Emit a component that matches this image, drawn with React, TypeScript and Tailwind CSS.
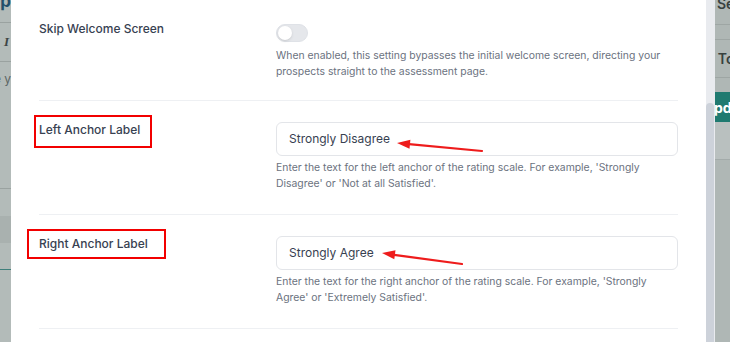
import type React from "react"

const rows = [
    {
        label: "Left Anchor Label",
        value: "Strongly Disagree",
        help: "Enter the text for the left anchor of the rating scale. For example, 'Strongly Disagree' or 'Not at all Satisfied'.",
    },
    {
        label: "Right Anchor Label",
        value: "Strongly Agree",
        help: "Enter the text for the right anchor of the rating scale. For example, 'Strongly Agree' or 'Extremely Satisfied'.",
    },
]

const LeftBackdrop: React.FC = () => (
    <div className="w-[11px] h-full bg-[#b3bbb9] flex flex-col overflow-hidden shrink-0">
        <div className="h-[23px] border-b border-[#9aa2a0] flex justify-end overflow-hidden">
            <span className="text-[17px] font-bold text-[#24506b] leading-none -mt-[7px] whitespace-nowrap">Up</span>
        </div>
        <div className="h-[39px] border-b border-[#9aa2a0] flex items-center justify-end overflow-hidden">
            <span className="text-[13px] italic font-bold text-[#3d4645] pr-[2px] font-['Liberation_Serif',serif]">I</span>
        </div>
        <div className="h-[127px] border-b border-[#9aa2a0] flex justify-end pt-[9px] overflow-hidden">
            <span className="text-[12px] text-[#5d6665] whitespace-nowrap leading-4">ue y</span>
        </div>
        <div className="h-[27px]" />
        <div className="h-[27px] bg-[#a9b1af]" />
        <div className="h-[27px] border-b border-[#3f7f7b]" />
        <div className="flex-1" />
    </div>
)

const RightBackdrop: React.FC = () => (
    <div className="w-[15px] h-full bg-[#afb7b5] flex flex-col overflow-hidden shrink-0">
        <div className="h-[25px] border-b border-[#9ea6a4] overflow-hidden pl-[2px]">
            <span className="block text-[14px] font-semibold text-[#38413f] leading-none -mt-[3px] whitespace-nowrap">Se</span>
        </div>
        <div className="h-[15px] border-b border-[#9ea6a4]" />
        <div className="h-[38px] border-b border-[#9ea6a4] flex items-center overflow-hidden">
            <span className="text-[14px] font-semibold text-[#38413f] whitespace-nowrap -ml-[9px]">e To</span>
        </div>
        <div className="h-[14px]" />
        <div className="h-[30px] bg-[#1f7a70] flex items-center overflow-hidden">
            <span className="text-[14px] font-bold text-white whitespace-nowrap -ml-[1px]">pd</span>
        </div>
        <div className="h-[38px] bg-[#b9c0bf] border-b border-[#a3abaa]" />
        <div className="flex-1" />
    </div>
)

const App: React.FC = () => {
    return (
        <div className="relative w-[730px] h-[342px] flex overflow-hidden bg-white font-['Inter',sans-serif]">
            <LeftBackdrop />

            <div className="flex-1 flex bg-white">
                <div className="flex-1 px-7">
                    {/* skip welcome screen */}
                    <div className="grid grid-cols-[237px_1fr] pt-[19px] pb-[20px] border-b border-[#eef0f3]">
                        <div className="text-[12px] leading-5 font-medium text-[#374151]">Skip Welcome Screen</div>
                        <div className="pt-[5px]">
                            <div className="w-[32px] h-[18px] rounded-full bg-[#e5e7eb] border border-[#dfe2e7] flex items-center px-[1px]">
                                <div className="w-[14px] h-[14px] rounded-full bg-white shadow-sm" />
                            </div>
                            <p className="mt-[6px] text-[10.4px] leading-4 text-[#6b7280]">
                                When enabled, this setting bypasses the initial welcome screen, directing your prospects straight to the assessment page.
                            </p>
                        </div>
                    </div>

                    {rows.map((row, i) => (
                        <div
                            key={i}
                            className="grid grid-cols-[237px_1fr] pt-[21px] pb-[22px] border-b border-[#eef0f3]"
                        >
                            <div className="text-[12px] leading-5 font-medium text-[#374151] -mt-[2px]">{row.label}</div>
                            <div>
                                <div className="h-[34px] rounded-md border border-[#e3e5e9] bg-white flex items-center px-3 text-[12px] text-[#374151]">
                                    {row.value}
                                </div>
                                <p className="mt-1 text-[10.4px] leading-4 text-[#6b7280] pr-5">{row.help}</p>
                            </div>
                        </div>
                    ))}
                </div>

                {/* scrollbar */}
                <div className="w-[9px] bg-[#e9ebef] flex flex-col pt-[103px]">
                    <div className="flex-1 w-[8px] rounded-t-md bg-[#cdd2da]" />
                </div>
            </div>

            <RightBackdrop />

            {/* annotations */}
            <div className="absolute left-[34px] top-[115px] w-[118px] h-[33px] border-2 border-[#f20000]" />
            <div className="absolute left-[27px] top-[229px] w-[139px] h-[30px] border-2 border-[#f20000]" />
            <svg className="absolute inset-0 pointer-events-none" width="730" height="342" viewBox="0 0 730 342">
                <line x1="482" y1="151" x2="409" y2="144.2" stroke="#ee1c1c" strokeWidth="2.2" strokeLinecap="round" />
                <polygon points="397,143 410.4,139.7 409.5,148.7" fill="#ee1c1c" />
                <line x1="462" y1="264" x2="394" y2="254.8" stroke="#ee1c1c" strokeWidth="2.2" strokeLinecap="round" />
                <polygon points="382,253 395.5,250.3 394.3,259.2" fill="#ee1c1c" />
            </svg>
        </div>
    )
}

export default App
